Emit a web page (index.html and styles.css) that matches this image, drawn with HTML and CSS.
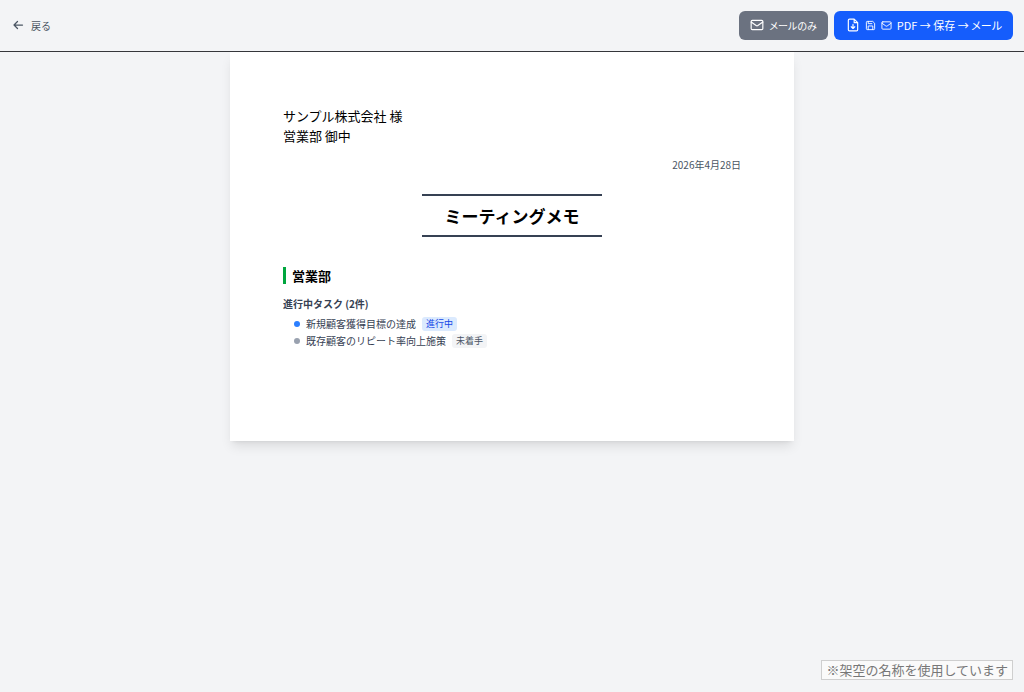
FILE: index.html
```html
<!DOCTYPE html>
<html lang="ja">
<head>
<meta charset="utf-8">
<meta name="viewport" content="width=device-width, initial-scale=1">
<title>ミーティングメモ</title>
<link rel="stylesheet" href="styles.css">
</head>
<body>
<header class="toolbar">
  <button class="back" type="button">
    <svg class="icon icon-back" viewBox="0 0 24 24"><path d="M21 12H4M11 5l-7 7 7 7"/></svg>
    <span>戻る</span>
  </button>
  <div class="actions">
    <button class="btn btn-gray" type="button">
      <svg class="icon icon-lg" viewBox="0 0 24 24"><rect x="2" y="4" width="20" height="16" rx="2"/><path d="m2 7 8.500 6a2.500 2.500 0 0 0 3 0L22 7"/></svg>
      <span>メールのみ</span>
    </button>
    <button class="btn btn-blue" type="button">
      <svg class="icon icon-lg" viewBox="0 0 24 24"><path d="M14 2H6a2 2 0 0 0-2 2v16a2 2 0 0 0 2 2h12a2 2 0 0 0 2-2V8zM14 2v6h6M12 11v7M9 15l3 3 3-3"/></svg>
      <svg class="icon icon-sm" viewBox="0 0 24 24"><path d="M16 3H5a2 2 0 0 0-2 2v14a2 2 0 0 0 2 2h14a2 2 0 0 0 2-2V8zM7 3v5h8M7 21v-8h10v8"/></svg>
      <svg class="icon icon-sm" viewBox="0 0 24 24"><rect x="2" y="4" width="20" height="16" rx="2"/><path d="m2 7 8.500 6a2.500 2.500 0 0 0 3 0L22 7"/></svg>
      <span>PDF → 保存 → メール</span>
    </button>
  </div>
</header>
<main class="sheet">
  <p class="recipient">サンプル株式会社 様<br>営業部 御中</p>
  <p class="date">2026年4月28日</p>
  <h1 class="title">ミーティングメモ</h1>
  <section>
    <h2 class="dept">営業部</h2>
    <h3 class="group">進行中タスク (2件)</h3>
    <ul class="tasks">
      <li class="task"><span class="dot dot-blue"></span><span>新規顧客獲得目標の達成</span><span class="badge badge-blue">進行中</span></li>
      <li class="task"><span class="dot"></span><span>既存顧客のリピート率向上施策</span><span class="badge">未着手</span></li>
    </ul>
  </section>
</main>
<p class="note">※架空の名称を使用しています</p>
</body>
</html>
```
FILE: styles.css
```css
* {
  box-sizing: border-box;
  margin: 0;
  padding: 0;
}

body {
  min-height: 100vh;
  display: flex;
  flex-direction: column;
  background: #f3f4f6;
  color: #000;
  font-family: "Noto Sans CJK JP", sans-serif;
  font-size: 10px;
}

button {
  border: 0;
  background: none;
  font-family: inherit;
  cursor: pointer;
}

.toolbar {
  display: flex;
  align-items: center;
  justify-content: space-between;
  height: 52px;
  padding: 0 11px 0 12px;
  border-bottom: 1px solid #36373b;
}

.back {
  display: flex;
  align-items: center;
  gap: 7px;
  padding-bottom: 1px;
  color: #4b5563;
  font-size: 10px;
}

.icon {
  width: 12px;
  height: 12px;
  flex: none;
  fill: none;
  stroke: currentColor;
  stroke-width: 2;
  stroke-linecap: round;
  stroke-linejoin: round;
}

.icon-lg {
  width: 14px;
  height: 14px;
}

.icon-sm {
  width: 11px;
  height: 11px;
}

.icon-back {
  stroke-width: 2.5;
}

.actions {
  display: flex;
  gap: 6px;
}

.btn {
  display: flex;
  align-items: center;
  gap: 5px;
  height: 29px;
  padding: 0 11px 1px;
  border-radius: 6px;
  color: #fff;
  font-size: 11px;
  font-feature-settings: "palt";
}

.btn-gray {
  background: #6b7280;
  font-size: 10px;
}

.btn-blue {
  padding-left: 12px;
  background: #155dfc;
}

.sheet {
  width: 55.1%;
  min-height: 389px;
  margin: 0 auto;
  padding: 54px 53px;
  background: #fff;
  box-shadow: 0 7px 11px -2px rgba(0, 0, 0, 0.1), 0 3px 4px -3px rgba(0, 0, 0, 0.1);
}

.recipient {
  font-size: 13px;
  line-height: 20px;
}

.date {
  margin-top: 11px;
  color: #4b5563;
  line-height: 15px;
  text-align: right;
}

.title {
  width: fit-content;
  margin: 22px auto 0;
  padding: 8px 23px;
  border-top: 2px solid #364153;
  border-bottom: 2px solid #364153;
  font-size: 17px;
  line-height: 23px;
}

.dept {
  margin-top: 30px;
  padding-left: 6px;
  border-left: 3px solid #00a63e;
  font-size: 13px;
  line-height: 17px;
}

.group {
  margin-top: 12px;
  color: #364153;
  font-size: 10px;
  line-height: 15px;
}

.tasks {
  margin-top: 4px;
  padding-left: 11px;
  list-style: none;
}

.task {
  display: flex;
  align-items: center;
  gap: 6px;
  height: 17px;
  color: #364153;
}

.dot {
  width: 6px;
  height: 6px;
  border-radius: 50%;
  background: #99a1af;
}

.dot-blue {
  background: #2b7fff;
}

.badge {
  padding: 0 4px;
  border-radius: 3px;
  background: #f3f4f6;
  color: #4a5565;
  font-size: 9px;
  line-height: 14px;
}

.badge-blue {
  background: #dbeafe;
  color: #1447e6;
}

.note {
  align-self: flex-end;
  margin: auto 11px 12px 0;
  padding: 0 4px;
  border: 1px solid #cfcfcf;
  background: #fafafa;
  color: #777;
  font-size: 13px;
  line-height: 18px;
}
```
